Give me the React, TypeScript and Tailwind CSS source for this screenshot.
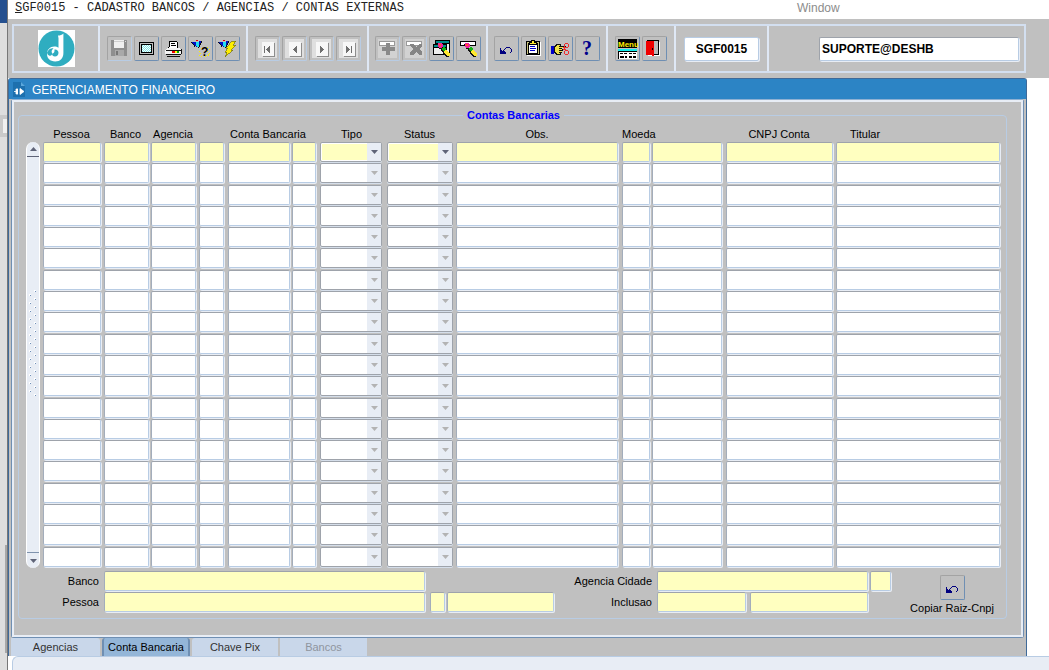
import React from "react";

const FIELD =
  "block h-5 min-w-0 rounded-[2px] border border-t-[#9ea3ab] border-l-[#a3adbb] border-r-[#b8cce4] border-b-[#b8cce4] px-1 text-[11px] text-black shadow-[1px_1px_0_#e8edf5] outline-none";

function Icon({ children }: { children: React.ReactNode }) {
  return (
    <svg width="19" height="19" viewBox="0 0 19 19" shapeRendering="crispEdges" aria-hidden="true" className="overflow-visible">
      {children}
    </svg>
  );
}

function ToolButton({
  label,
  disabled,
  children,
}: {
  label: string;
  disabled?: boolean;
  children: React.ReactNode;
}) {
  return (
    <button
      type="button"
      aria-label={label}
      disabled={disabled}
      className={
        "flex size-[25px] shrink-0 items-center justify-center rounded-[2px] border border-t-[#a3a3a3] border-l-[#a3a3a3] " +
        (disabled ? "border-r-[#b8cce4] border-b-[#b8cce4]" : "border-r-[#6f8fb3] border-b-[#6f8fb3]")
      }
    >
      {children}
    </button>
  );
}

const SaveIcon = () => (
  <Icon>
    <rect x="1" y="1" width="16" height="16" fill="#8f8f8f" />
    <rect x="4" y="1" width="10" height="8" fill="#f0f0f0" />
    <rect x="4" y="2" width="10" height="1" fill="#cfcfcf" />
    <rect x="5" y="11" width="9" height="6" fill="#a9a9a9" />
    <rect x="6" y="12" width="2" height="4" fill="#777" />
    <rect x="15" y="2" width="1" height="1" fill="#ddd" />
  </Icon>
);

const ScreenIcon = () => (
  <Icon>
    <rect x="2" y="3" width="15" height="13" fill="#000" />
    <rect x="3" y="4" width="13" height="11" fill="#c0c0c0" />
    <rect x="4" y="5" width="11" height="9" fill="#000" />
    <rect x="5" y="6" width="9" height="7" fill="#fff" />
    {Array.from({ length: 63 }, (_, i) => i)
      .filter((i) => i % 2 === 0)
      .map((i) => (
        <rect key={i} x={5 + (i % 9)} y={6 + Math.floor(i / 9)} width="1" height="1" fill="#7fe6e6" />
      ))}
  </Icon>
);

const PrinterIcon = () => (
  <Icon>
    <path d="M5 2h8v1h1v7h-10v-2h1z" fill="#000" />
    <path d="M6 3h7v6h-8v-1h1z" fill="#fff" />
    <path d="M7 4h4v1h-4zM7 6h5v1h-5z" fill="#000" />
    <path d="M3 9h13v1h1v5h-1v1h-14v-1h-1v-4h1v-1h1z" fill="#f4f4f4" />
    <path d="M2 11h15v1h-15zM2 15h15v1h-15zM17 10h1v5h-1zM3 17h13v1h-13z" fill="#111" />
    <rect x="8" y="12" width="3" height="2" fill="#e00" />
    <rect x="11" y="12" width="2" height="2" fill="#ff0" />
    <rect x="13" y="12" width="2" height="2" fill="#0a0" />
  </Icon>
);

const Torch = () => (
  <>
    <path d="M1 3h4v1h1v4h-1v-1h-1v-1h-1v-1h-2z" fill="#0010c8" />
    <path d="M5 3h3v5h-2v-1h-1z" fill="#25dff0" />
    <path d="M8 2h2v3h-1v2h-1z" fill="#0010c8" />
    <path d="M10 2h1v2h-1v2h-1v2h-1v1h-1v-1h1v-2h1v-2h1z" fill="#111" />
    <path d="M5 1h2v1h-2z" fill="#d00" />
    <path d="M0 3h1v1h-1zM1 4h1v1h-1zM2 5h1v1h-1zM3 6h1v2h-1z" fill="#111" />
  </>
);

const QueryHelpIcon = () => (
  <Icon>
    <Torch />
    {[
      [10, 9], [12, 8], [16, 8], [18, 10], [8, 12], [18, 14], [8, 16], [10, 17], [14, 17], [17, 16], [16, 12], [9, 14], [17, 15], [15, 16],
    ].map(([x, y]) => (
      <rect key={`${x}-${y}`} x={x} y={y} width="1" height="1" fill="#ffef00" />
    ))}
    <text x="10" y="17" fontFamily="Liberation Sans, sans-serif" fontWeight="700" fontSize="12" fill="#000">
      ?
    </text>
  </Icon>
);

const QueryRunIcon = () => (
  <Icon>
    <Torch />
    <path d="M14 2h4l-3 4h3l-5 5h2l-8 7 2-5h-2l3-4h-2z" fill="#ffee00" stroke="#75720f" strokeWidth="0.7" />
  </Icon>
);

function NavIcon({ d }: { d: string }) {
  return (
    <Icon>
      <rect x="0" y="0" width="19" height="19" fill="#dfdfdf" />
      <rect x="5" y="4" width="12" height="14" fill="#8d8d8d" />
      <rect x="4" y="3" width="12" height="14" fill="#f7f7f7" />
      <path d={d} fill="#6f6f6f" />
    </Icon>
  );
}

const InsertIcon = () => (
  <Icon>
    <rect x="0" y="0" width="19" height="19" fill="#d2d2d2" />
    <rect x="1" y="2" width="16" height="5" fill="#999" />
    <rect x="2" y="3" width="14" height="3" fill="#fff" />
    <path d="M8 4h4v4h5v4h-5v4h-4v-4h-4v-4h4z" fill="#8a8a8a" />
  </Icon>
);

const DeleteIcon = () => (
  <Icon>
    <rect x="0" y="0" width="19" height="19" fill="#d2d2d2" />
    <rect x="1" y="2" width="16" height="5" fill="#999" />
    <rect x="2" y="3" width="14" height="3" fill="#fff" />
    <path d="M5 5h3l3 3 3-3h3v2l-3 3 3 3v3h-3l-3-3-3 3h-3v-3l3-3-3-3z" fill="#858585" />
  </Icon>
);

const Pencil = () => (
  <>
    <path d="M5 6h1v2h1v2h2v2h1v1h1v2h1v1h1v1h1v1h3v-1h-2v-6h-4l-4-6h-3z" fill="#111" />
    <path d="M6 4h4v1h1v3h-1v1h-3v-1h-1z" fill="#f3209c" />
    <path d="M7 5h2v2h-2z" fill="#ff5a20" />
    <path d="M11 8h2v1h1v2h-1v1h-2v-1h-1v-2h1z" fill="#12b312" />
    <path d="M13 11h2v1h1v1h1v1h1v3h-3v-1h-1v-1h-1v-1h-1v-2h1z" fill="#ffe92e" />
  </>
);

const ClearBlockIcon = () => (
  <Icon>
    <rect x="3" y="1" width="15" height="14" fill="#000" />
    <rect x="4" y="2" width="13" height="2" fill="#008c8c" />
    <rect x="4" y="5" width="13" height="9" fill="#eee" />
    <rect x="1" y="5" width="14" height="11" fill="#000" />
    <rect x="2" y="6" width="12" height="2" fill="#008c8c" />
    <rect x="2" y="9" width="12" height="6" fill="#eee" />
    <Pencil />
  </Icon>
);

const ClearRecordIcon = () => (
  <Icon>
    <rect x="1" y="2" width="16" height="5" fill="#000" />
    <rect x="2" y="3" width="14" height="3" fill="#fff" />
    <Pencil />
  </Icon>
);

const UndoIcon = () => (
  <Icon>
    <path d="M3 9h1v2h1v1h1v-1h1v1h1v1h1v2h-6z" fill="#000080" />
    <path d="M7 10h1v1h-1zM8 9h1v1h-1zM9 8h4v1h-4zM13 9h1v1h-1zM14 10h1v3h-1zM13 13h1v1h-1z" fill="#000080" />
  </Icon>
);

const ClipboardIcon = () => (
  <Icon>
    <path d="M3 2h13v1h1v14h-14z" fill="#fff" />
    <path d="M2 2h14v14h-14z" fill="#000" />
    <rect x="3" y="3" width="12" height="12" fill="#c9c27c" />
    <rect x="4" y="4" width="10" height="11" fill="#000" />
    <rect x="5" y="5" width="8" height="9" fill="#fff" />
    <path d="M7 1h4v2h2v3h-8v-3h2z" fill="#000" />
    <path d="M8 2h2v2h2v1h-6v-1h2z" fill="#ffe92e" />
    <path d="M6 7h5v1h-5zM6 9h6v1h-6zM6 11h5v1h-5z" fill="#0000c8" />
  </Icon>
);

const HandCutIcon = () => (
  <Icon>
    <rect x="0" y="7" width="3" height="8" fill="#0000c8" />
    <path d="M3 7l3-2h4v2h5v2h-4v1h1v2h-1v2h-1v2h-5l-2-2z" fill="#111" />
    <path d="M4 8l3-2h2l-1 2h6v1h-6v1h3v1h-3v1h3v1h-3v1h1v1h-3l-2-2z" fill="#f0e04a" />
    <path d="M12 10h1v1h-1zM13 9h1v1h-1z" fill="#ef2b2b" />
    <path
      d="M14 4h3v1h-3zM13 5h1v3h-1zM17 5h1v3h-1zM14 8h3v1h-3zM14 11h3v1h-3zM13 12h1v3h-1zM17 12h1v3h-1zM14 15h3v1h-3zM12 8h2v1h-2zM13 10h2v1h-2z"
      fill="#ef2b2b"
    />
  </Icon>
);

const HelpIcon = () => (
  <Icon>
    <text x="4" y="16" fontFamily="Liberation Serif, serif" fontWeight="700" fontSize="20" fill="#00008b">
      ?
    </text>
  </Icon>
);

const MenuIcon = () => (
  <svg width="21" height="21" viewBox="0 0 21 21" shapeRendering="crispEdges" aria-hidden="true">
    <rect x="1" y="1" width="19" height="9" fill="#000" />
    <text x="1" y="9" fontFamily="Liberation Sans, sans-serif" fontWeight="700" fontSize="8" fill="#ffee00">
      Menu
    </text>
    <rect x="1" y="11" width="19" height="2" fill="#1ee" />
    <rect x="1" y="13" width="19" height="8" fill="#000" />
    <rect x="2" y="14" width="18" height="7" fill="#fff" />
    <path d="M3 15h3v1h-3zM7 15h3v1h-3zM12 15h3v1h-3zM16 15h3v1h-3zM3 18h4v2h-4zM8 18h2v2h-2zM12 18h3v2h-3zM16 18h3v2h-3z" fill="#000" />
  </svg>
);

const ExitIcon = () => (
  <Icon>
    <rect x="3" y="3" width="12" height="14" fill="#fff" />
    <rect x="2" y="1" width="12" height="15" fill="#000" />
    <rect x="4" y="2" width="9" height="13" fill="#b9b9b9" />
    <path d="M1 2h7l1 1v14h-2l-1-1h-5z" fill="#f00000" />
    <rect x="7" y="9" width="1" height="2" fill="#000" />
  </Icon>
);

const Logo = () => (
  <svg width="37" height="37" viewBox="0 0 37 37" role="img" aria-label="Logo">
    <rect width="37" height="37" fill="#fff" />
    <circle cx="18.500" cy="18.500" r="18" fill="#2fadc0" />
    <path d="M20 5.500c2.400 0 3.800-.6 5.400-2v19.500c0 5.400-3.200 8.500-8.200 8.500-5.200 0-8.200-3-8.200-7.400 0-4.300 3-7.600 7.300-7.600 1.800 0 3 .4 4.200 1.200v-9.400z" fill="#fff" />
    <path d="M9 22.500c2-4.500 5.500-4.500 6.500-4-1.800 1-2.300 3-1.500 4.500s-1 3.500-3 2.500c-1-.5-1.800-1.500-2-3z" fill="#2fadc0" />
    <path d="M16.500 19.500c2-.5 4 1 4 3.300 0 2.200-1.500 3.700-3.500 3.700s-3-1.300-3-2.800c1.800-.2 2.800-1.700 2.500-4.200z" fill="#2fadc0" />
  </svg>
);

const SECTION = "flex shrink-0 items-center justify-center gap-[2px] border-r-2 border-r-[#dfe8f5]";

function Toolbar() {
  return (
    <div className="bg-[#c0c0c0] pt-[5px] pr-[23px] pb-[5px] pl-1">
      <div className="flex h-[49px] border-2 border-[#d3dff0]" role="toolbar" aria-label="Ferramentas">
        <div className={SECTION + " w-[86px]"}>
          <Logo />
        </div>
        <div className={SECTION + " w-[148px]"}>
          <ToolButton label="Salvar" disabled><SaveIcon /></ToolButton>
          <ToolButton label="Tela"><ScreenIcon /></ToolButton>
          <ToolButton label="Imprimir"><PrinterIcon /></ToolButton>
          <ToolButton label="Entrar consulta"><QueryHelpIcon /></ToolButton>
          <ToolButton label="Executar consulta"><QueryRunIcon /></ToolButton>
        </div>
        <div className={SECTION + " w-[121px]"}>
          <ToolButton label="Primeiro" disabled><NavIcon d="M6 7h1v7h-1zM11 7h1v7h-1v-1h-1v-1h-1v-1h-1v-1h1v-1h1v-1h1z" /></ToolButton>
          <ToolButton label="Anterior" disabled><NavIcon d="M11 7h1v7h-1v-1h-1v-1h-1v-1h-1v-1h1v-1h1v-1h1z" /></ToolButton>
          <ToolButton label="Proximo" disabled><NavIcon d="M8 7h1v1h1v1h1v1h1v1h-1v1h-1v1h-1v1h-1z" /></ToolButton>
          <ToolButton label="Ultimo" disabled><NavIcon d="M7 7h1v1h1v1h1v1h1v1h-1v1h-1v1h-1v1h-1zM12 7h1v7h-1z" /></ToolButton>
        </div>
        <div className={SECTION + " w-[119px]"}>
          <ToolButton label="Inserir" disabled><InsertIcon /></ToolButton>
          <ToolButton label="Excluir" disabled><DeleteIcon /></ToolButton>
          <ToolButton label="Limpar bloco"><ClearBlockIcon /></ToolButton>
          <ToolButton label="Limpar registro"><ClearRecordIcon /></ToolButton>
        </div>
        <div className={SECTION + " w-[120px]"}>
          <ToolButton label="Desfazer"><UndoIcon /></ToolButton>
          <ToolButton label="Lista de valores"><ClipboardIcon /></ToolButton>
          <ToolButton label="Recortar"><HandCutIcon /></ToolButton>
          <ToolButton label="Ajuda"><HelpIcon /></ToolButton>
        </div>
        <div className={SECTION + " w-[68px]"}>
          <ToolButton label="Menu"><MenuIcon /></ToolButton>
          <ToolButton label="Sair"><ExitIcon /></ToolButton>
        </div>
        <div className={SECTION + " w-[93px]"}>
          <input
            aria-label="Programa"
            readOnly
            defaultValue="SGF0015"
            className="h-6 w-[75px] rounded-[2px] border border-[#b8cce4] bg-white text-center text-[12px] font-bold shadow-[1px_1px_0_#e8edf5] outline-none"
          />
        </div>
        <div className="flex min-w-0 flex-1 items-center pr-[5px] pl-[50px]">
          <input
            aria-label="Usuario"
            readOnly
            defaultValue="SUPORTE@DESHB"
            className="h-6 w-full min-w-0 rounded-[2px] border border-t-[#9ea3ab] border-r-[#b8cce4] border-b-[#b8cce4] border-l-[#9ea3ab] bg-white px-[2px] text-[12px] font-bold shadow-[1px_1px_0_#e8edf5] outline-none"
          />
        </div>
      </div>
    </div>
  );
}

type Column = { name: string; width: string; pad: string; select?: boolean };

const COLUMNS: Column[] = [
  { name: "Pessoa", width: "w-[61px]", pad: "pr-[3px]" },
  { name: "Banco", width: "w-[47px]", pad: "pr-[2px]" },
  { name: "Agencia", width: "w-[48px]", pad: "pr-[3px]" },
  { name: "Digito agencia", width: "w-[29px]", pad: "pr-[4px]" },
  { name: "Conta Bancaria", width: "w-[64px]", pad: "pr-[2px]" },
  { name: "Digito conta", width: "w-[28px]", pad: "pr-[4px]" },
  { name: "Tipo", width: "w-[67px]", pad: "pr-[5px]", select: true },
  { name: "Status", width: "w-[69px]", pad: "pr-[3px]", select: true },
  { name: "Obs.", width: "", pad: "pr-[4px]" },
  { name: "Moeda", width: "w-[30px]", pad: "pr-[2px]" },
  { name: "Descricao moeda", width: "w-[74px]", pad: "pr-[4px]" },
  { name: "CNPJ Conta", width: "w-[110px]", pad: "pr-[3px]" },
  { name: "Titular", width: "w-[165px]", pad: "pr-[1px]" },
];

const ROWS = Array.from({ length: 20 }, (_, i) => i);

function SelectCell({ label, active }: { label: string; active: boolean }) {
  return (
    <div className="relative">
      <select
        aria-label={label}
        disabled={!active}
        className={
          "block h-5 w-full appearance-none rounded-[2px] border border-[#9ea3ab] opacity-100 shadow-[inset_0_0_0_1px_#fff,0_1px_0_#d5deea] outline-none " +
          (active ? "bg-[#ffffc0]" : "bg-white")
        }
      >
        <option value=""></option>
      </select>
      <span className="pointer-events-none absolute inset-y-px right-px flex w-[14px] items-center justify-center bg-[#e8edf5]">
        <svg width="7" height="4" viewBox="0 0 7 4" aria-hidden="true">
          <path d="M0 0h7L3.500 4z" fill={active ? "#5f6478" : "#b3b3b3"} />
        </svg>
      </span>
    </div>
  );
}

function Scrollbar() {
  return (
    <div className="mt-[21px] mr-[3px] flex w-[14px] shrink-0 flex-col overflow-hidden rounded-full border-x border-white bg-[#e8edf5]">
      <button type="button" aria-label="Rolar para cima" className="flex h-[15px] items-center justify-center border-b border-[#5f6478]">
        <svg width="7" height="4" viewBox="0 0 7 4" aria-hidden="true"><path d="M3.500 0L7 4H0z" fill="#5f6478" /></svg>
      </button>
      <div className="flex flex-1 items-start justify-center pt-[133px]">
        <svg width="10" height="108" viewBox="0 0 10 108" shapeRendering="crispEdges" aria-hidden="true">
          {Array.from({ length: 27 }, (_, i) => (
            <g key={i}>
              <rect x={i % 2 ? 1 : 6} y={i * 4} width="2" height="2" fill="#fff" />
              <rect x={i % 2 ? 2 : 7} y={i * 4 + 1} width="1" height="1" fill="#6f8fb8" />
            </g>
          ))}
        </svg>
      </div>
      <button type="button" aria-label="Rolar para baixo" className="flex h-4 items-center justify-center border-t border-[#7f93ad]">
        <svg width="7" height="4" viewBox="0 0 7 4" aria-hidden="true"><path d="M0 0h7L3.500 4z" fill="#5f6478" /></svg>
      </button>
    </div>
  );
}

function AccountsTable() {
  return (
    <table className="h-[447px] w-full table-fixed border-collapse text-[11px]">
      <colgroup>
        {COLUMNS.map((c) => (
          <col key={c.name} className={c.width} />
        ))}
      </colgroup>
      <thead>
        <tr className="h-[21px] whitespace-nowrap [&>th]:p-0 [&>th]:pt-1 [&>th]:leading-4 [&>th]:font-normal">
          <th><span className="block pr-1">Pessoa</span></th>
          <th><span className="block pr-1">Banco</span></th>
          <th><span className="block pr-1">Agencia</span></th>
          <th></th>
          <th colSpan={2}><span className="block pr-3 text-center">Conta Bancaria</span></th>
          <th><span className="block pr-1">Tipo</span></th>
          <th><span className="block pr-1">Status</span></th>
          <th><span className="block pr-1">Obs.</span></th>
          <th colSpan={2} className="text-left">Moeda</th>
          <th><span className="block pr-1">CNPJ Conta</span></th>
          <th><span className="block pl-[14px] text-left">Titular</span></th>
        </tr>
      </thead>
      <tbody>
        {ROWS.map((row) => (
          <tr key={row} className="h-[21px]">
            {COLUMNS.map((c) => (
              <td key={c.name} className={"p-0 align-top " + c.pad}>
                {c.select ? (
                  <SelectCell label={`${c.name} ${row + 1}`} active={row === 0} />
                ) : (
                  <input
                    aria-label={`${c.name} ${row + 1}`}
                    className={FIELD + " w-full " + (row === 0 ? "bg-[#ffffc0]" : "bg-white")}
                  />
                )}
              </td>
            ))}
          </tr>
        ))}
      </tbody>
    </table>
  );
}

function Details() {
  const yellow = FIELD + " bg-[#ffffc0]";
  return (
    <div className="flex items-start text-[11px] leading-5">
      <div className="grid shrink-0 grid-cols-[80px_auto] gap-x-[5px] gap-y-px">
        <label htmlFor="banco" className="text-right">Banco</label>
        <input id="banco" className={yellow + " w-[321px]"} />
        <label htmlFor="pessoa" className="text-right">Pessoa</label>
        <div className="flex">
          <input id="pessoa" className={yellow + " w-[321px]"} />
          <input aria-label="Tipo pessoa" className={yellow + " ml-[5px] w-[15px]"} />
          <input aria-label="Documento" className={yellow + " ml-[2px] w-[107px]"} />
        </div>
      </div>
      <div className="ml-auto grid shrink-0 grid-cols-[90px_auto] gap-x-[5px] gap-y-px">
        <label htmlFor="cidade" className="text-right">Agencia Cidade</label>
        <div className="flex">
          <input id="cidade" className={yellow + " w-[211px]"} />
          <input aria-label="UF" className={yellow + " ml-[2px] w-[21px]"} />
        </div>
        <label htmlFor="inclusao" className="text-right">Inclusao</label>
        <div className="flex">
          <input id="inclusao" className={yellow + " w-[89px]"} />
          <input aria-label="Usuario inclusao" className={yellow + " ml-1 w-[118px]"} />
        </div>
      </div>
      <div className="ml-3 flex w-[98px] shrink-0 flex-col items-center pt-1">
        <ToolButton label="Copiar Raiz-Cnpj"><UndoIcon /></ToolButton>
        <span className="leading-4 whitespace-nowrap">Copiar Raiz-Cnpj</span>
      </div>
    </div>
  );
}

function Tabs() {
  const base = "h-[18px] text-center leading-[19px] ";
  return (
    <div role="tablist" className="flex gap-[2px] pl-[2px] text-[11px]">
      <button type="button" role="tab" className={base + "w-[89px] rounded-tr-[3px] bg-[#c9d7ea] text-[#333]"}>Agencias</button>
      <button
        type="button"
        role="tab"
        aria-selected="true"
        className={base + "w-[88px] rounded-t-[3px] border-x-2 border-[#6f8fb3] bg-[#94b6d8] text-black"}
      >
        Conta Bancaria
      </button>
      <button type="button" role="tab" className={base + "w-[86px] rounded-tl-[3px] bg-[#c9d7ea] text-[#333]"}>Chave Pix</button>
      <button type="button" role="tab" disabled className={base + "w-[87px] bg-[#c9d7ea] text-[#8f959e]"}>Bancos</button>
    </div>
  );
}

export default function App() {
  return (
    <div className="flex min-h-screen bg-white font-['Liberation_Sans',Arial,sans-serif] text-black">
      <div className="flex w-2 shrink-0 flex-col border-r border-[#777] bg-[#dedede]">
        <div className="h-[23px] bg-[#25508f]" />
        <div className="mt-[92px] flex h-[22px] items-center justify-end bg-[#cacaca]">
          <div className="h-[14px] w-1 bg-[#f0f0f0]" />
        </div>
        <div className="mt-[408px] h-[108px] w-[2px] self-end bg-[#a8a8a8]" />
      </div>
      <main className="flex min-w-0 flex-1 flex-col">
        <div className="flex h-[19px] shrink-0 bg-white whitespace-nowrap">
          <h1 className="w-[789px] pl-[7px] font-['Liberation_Mono',monospace] text-[12px] leading-4 text-[#222]">
            <span className="underline">S</span>GF0015 - CADASTRO BANCOS / AGENCIAS / CONTAS EXTERNAS
          </h1>
          <span className="text-[12px] leading-4 text-[#8c8c8c]">Window</span>
        </div>
        <Toolbar />
        <section className="mr-[22px] rounded-t-[3px] border-t border-r border-l border-[#3f6a99] bg-[#c0c0c0]">
          <header className="flex h-5 items-center gap-[7px] bg-[#2c84c5] pl-1 text-white">
            <svg width="12" height="15" viewBox="0 0 12 15" aria-hidden="true">
              <path d="M0 0h8l4 4v11H0z" fill="#1d70ae" />
              <path d="M8 0v4h4z" fill="#5aa7dc" />
              <path d="M5 7H3v5h2M1 9.500h3M7 6.500v6l4-3z" stroke="#fff" fill="#fff" strokeWidth="0.8" />
            </svg>
            <h2 className="pt-[2px] text-[12px] leading-[18px]">GERENCIAMENTO FINANCEIRO</h2>
          </header>
          <div className="mr-[2px] ml-[2px] rounded-[3px] border border-t-[#8fb0d2] border-r-[#6f8fb3] border-b-[#6f8fb3] border-l-[#6f8fb3]">
            <div className="border-2 border-[#e8edf5] pr-[14px] pb-4 pl-1">
              <fieldset className="mt-[7px] min-w-0 rounded-[4px] border border-[#b8cce4] pr-[5px] pb-[2px] pl-[7px]">
                <legend className="mx-auto px-1 text-[11px] leading-3 font-bold text-[#0000ff]">Contas Bancarias</legend>
                <div className="flex pb-[3px]">
                  <Scrollbar />
                  <AccountsTable />
                </div>
                <div className="-ml-[7px]">
                  <Details />
                </div>
              </fieldset>
            </div>
          </div>
          <Tabs />
        </section>
        <div className="min-h-[14px] flex-1 pl-1">
          <div className="h-full rounded-tl-[6px] border-t border-l border-[#b8cce4] bg-[#e8edf5]" />
        </div>
      </main>
    </div>
  );
}
